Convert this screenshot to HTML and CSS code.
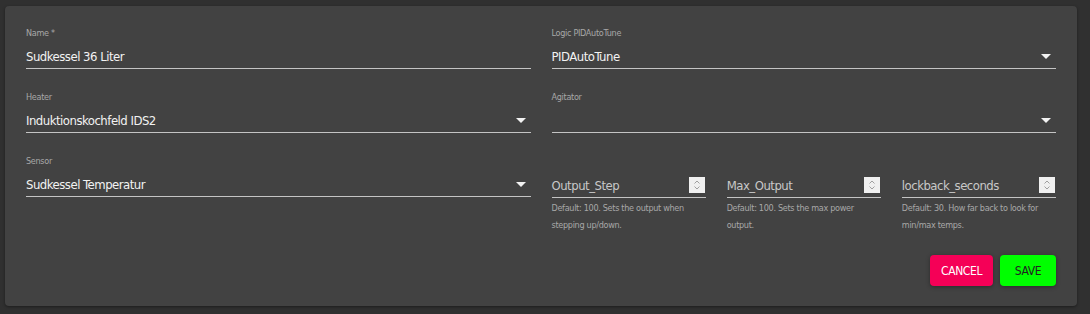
FILE: index.html
```html
<!DOCTYPE html>
<html lang="en">
<head>
    <meta charset="UTF-8">
    <title>Kettle</title>
    <link rel="stylesheet" href="styles.css">
</head>
<body>
    <div class="card">
        <div class="form">
            <div class="field">
                <label class="label">Name *</label>
                <div class="input"><span class="value">Sudkessel 36 Liter</span></div>
            </div>
            <div class="field">
                <label class="label">Logic PIDAutoTune</label>
                <div class="input select"><span class="value">PIDAutoTune</span><span class="arrow"></span></div>
            </div>
            <div class="field">
                <label class="label">Heater</label>
                <div class="input select"><span class="value">Induktionskochfeld IDS2</span><span class="arrow"></span></div>
            </div>
            <div class="field">
                <label class="label">Agitator</label>
                <div class="input select"><span class="value"></span><span class="arrow"></span></div>
            </div>
            <div class="field">
                <label class="label">Sensor</label>
                <div class="input select"><span class="value">Sudkessel Temperatur</span><span class="arrow"></span></div>
            </div>
            <div class="params">
                <div class="param">
                    <div class="input number"><span class="placeholder">Output_Step</span><span class="spin"><svg width="16" height="16" viewBox="0 0 16 16"><path d="M5.5 6.5 8 4 10.5 6.5M5.5 9.5 8 12 10.5 9.5" fill="none" stroke="#a0a0a0" stroke-width="1"/></svg></span></div>
                    <p class="help">Default: 100. Sets the output when stepping up/down.</p>
                </div>
                <div class="param">
                    <div class="input number"><span class="placeholder">Max_Output</span><span class="spin"><svg width="16" height="16" viewBox="0 0 16 16"><path d="M5.5 6.5 8 4 10.5 6.5M5.5 9.5 8 12 10.5 9.5" fill="none" stroke="#a0a0a0" stroke-width="1"/></svg></span></div>
                    <p class="help">Default: 100. Sets the max power output.</p>
                </div>
                <div class="param">
                    <div class="input number"><span class="placeholder">lockback_seconds</span><span class="spin"><svg width="16" height="16" viewBox="0 0 16 16"><path d="M5.5 6.5 8 4 10.5 6.5M5.5 9.5 8 12 10.5 9.5" fill="none" stroke="#a0a0a0" stroke-width="1"/></svg></span></div>
                    <p class="help">Default: 30. How far back to look for min/max temps.</p>
                </div>
            </div>
        </div>
        <div class="actions">
            <button class="btn cancel">Cancel</button>
            <button class="btn save">Save</button>
        </div>
    </div>
</body>
</html>
```

FILE: styles.css
```css
body{
    margin: 0;
    background-color: #303030;
    font-family: "DejaVu Sans Condensed", "Liberation Sans", sans-serif;
}
.card{
    margin: 6px 13px 8px 5px;
    padding: 21px 21px 20px;
    background-color: #424242;
    border-radius: 4px;
    box-shadow: 0 1px 3px rgba(0,0,0,0.4);
}
.form{
    display: grid;
    grid-template-columns: 1fr 1fr;
    column-gap: 21px;
    row-gap: 22px;
}
.field{
    display: flex;
    flex-direction: column;
}
.label{
    font-size: 9px;
    line-height: 12px;
    letter-spacing: -0.3px;
    color: #a8a8a8;
}
.input{
    display: flex;
    align-items: center;
    height: 23px;
    margin-top: 6px;
    border-bottom: 1px solid #c4c4c4;
}
.value{
    flex: 1;
    font-size: 13px;
    letter-spacing: -0.5px;
    color: #f2f2f2;
}
.arrow{
    width: 0;
    height: 0;
    margin-right: 5px;
    border-left: 5px solid transparent;
    border-right: 5px solid transparent;
    border-top: 5px solid #f2f2f2;
}
.params{
    display: grid;
    grid-template-columns: 1fr 1fr 1fr;
    column-gap: 21px;
    padding-top: 13px;
}
.number{
    margin-top: 5px;
    height: 24px;
}
.placeholder{
    flex: 1;
    font-size: 13px;
    letter-spacing: -0.5px;
    color: #c8c8c8;
}
.spin{
    width: 16px;
    height: 16px;
    margin-right: 1px;
    background-color: #f0f0f0;
}
.spin svg{
    display: block;
}
.help{
    margin: 2px 0 0;
    font-size: 9px;
    line-height: 17px;
    letter-spacing: -0.3px;
    color: #a8a8a8;
}
.actions{
    display: flex;
    justify-content: flex-end;
    gap: 7px;
    margin-top: 21px;
}
.btn{
    min-width: 56px;
    height: 31px;
    padding: 0 11px;
    border: none;
    border-radius: 4px;
    font-family: inherit;
    font-size: 12px;
    letter-spacing: -0.4px;
    text-transform: uppercase;
    box-shadow: 0 1px 4px rgba(0,0,0,0.35);
}
.cancel{
    background-color: #f50057;
    color: #ffffff;
}
.save{
    background-color: #00ff00;
    color: #222222;
}
```
